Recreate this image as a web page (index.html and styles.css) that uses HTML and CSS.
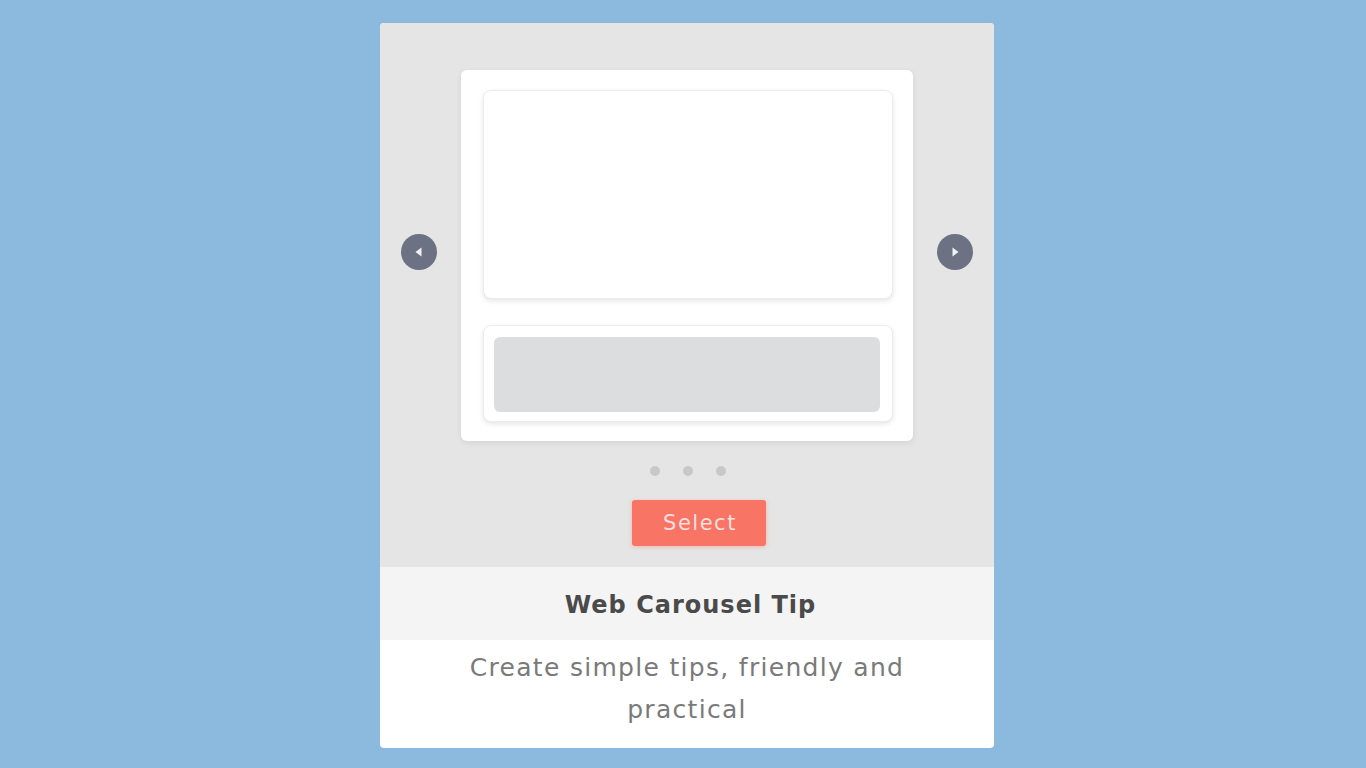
FILE: index.html
```html
<!DOCTYPE html>
<html>
<head>
<meta charset="utf-8">
<link rel="stylesheet" href="styles.css">
</head>
<body>
<div class="page">
  <div class="card">
    <div class="stage">
      <div class="carousel">
        <button class="arrow" aria-label="Previous">
          <svg width="36" height="36" viewBox="0 0 36 36"><circle cx="18" cy="18" r="18" fill="#6c7184"/><path d="M20.5 13.5 L14.5 18 L20.5 22.5 Z" fill="#f2f2f4"/></svg>
        </button>
        <div class="preview">
          <div class="slide-media"></div>
          <div class="slide-footer"><div class="slide-bar"></div></div>
        </div>
        <button class="arrow" aria-label="Next">
          <svg width="36" height="36" viewBox="0 0 36 36"><circle cx="18" cy="18" r="18" fill="#6c7184"/><path d="M15.5 13.5 L21.5 18 L15.5 22.5 Z" fill="#f2f2f4"/></svg>
        </button>
      </div>
      <div class="dots"><span></span><span></span><span></span></div>
      <button class="select">Select</button>
    </div>
    <div class="title">Web Carousel Tip</div>
    <div class="desc">Create simple tips, friendly and practical</div>
  </div>
</div>
</body>
</html>
```

FILE: styles.css
```css
html, body {
  margin: 0;
  padding: 0;
}
body {
  background: #8cb9de;
  font-family: "DejaVu Sans", "Liberation Sans", sans-serif;
  width: 1366px;
  height: 768px;
  overflow: hidden;
}
.page {
  display: flex;
  justify-content: center;
  padding-top: 23px;
  padding-left: 8px;
}
.card {
  width: 614px;
  background: #ffffff;
  border-radius: 4px;
  overflow: hidden;
  display: flex;
  flex-direction: column;
}
.stage {
  background: #e5e5e5;
  padding: 47px 0 21px;
  display: flex;
  flex-direction: column;
  align-items: center;
}
.carousel {
  width: 100%;
  box-sizing: border-box;
  padding: 0 21px;
  display: flex;
  align-items: center;
  justify-content: space-between;
}
.arrow {
  width: 36px;
  height: 36px;
  padding: 0;
  border: 0;
  background: none;
  display: block;
  margin-bottom: 8px;
}
.arrow svg { display: block; }
.preview {
  width: 452px;
  height: 371px;
  box-sizing: border-box;
  background: #fff;
  border-radius: 6px;
  box-shadow: 0 2px 6px rgba(0,0,0,0.08);
  padding: 20px 20px 19px 22px;
  display: flex;
  flex-direction: column;
  gap: 26px;
}
.slide-media {
  height: 209px;
  border-radius: 8px;
  background: #fff;
  border: 1px solid #ececec;
  box-sizing: border-box;
  box-shadow: 0 2px 5px rgba(0,0,0,0.10);
}
.slide-footer {
  height: 97px;
  border-radius: 8px;
  background: #fff;
  border: 1px solid #ececec;
  box-sizing: border-box;
  box-shadow: 0 2px 5px rgba(0,0,0,0.10);
  padding: 11px 12px 9px 10px;
  display: flex;
}
.slide-bar {
  flex: 1;
  background: #dcdddf;
  border-radius: 6px;
}
.dots {
  display: flex;
  gap: 23px;
  margin-top: 25px;
  margin-left: 2px;
}
.dots span {
  width: 10px;
  height: 10px;
  border-radius: 50%;
  background: #c8c8c8;
}
.select {
  margin-top: 24px;
  margin-left: 24px;
  width: 134px;
  height: 46px;
  border: 0;
  border-radius: 3px;
  background: #f87565;
  color: rgba(255,255,255,0.78);
  font-family: "DejaVu Sans", "Liberation Sans", sans-serif;
  font-size: 21px;
  letter-spacing: 1.5px;
  padding: 0 0 0 2px;
  box-shadow: 0 1px 4px rgba(248,117,101,0.4);
}
.title {
  background: #f4f4f4;
  height: 73px;
  display: flex;
  align-items: center;
  justify-content: center;
  font-weight: 700;
  font-size: 24px;
  letter-spacing: 1px;
  color: #4a4a4a;
  padding: 2px 0 0 7px;
  box-sizing: border-box;
}
.desc {
  height: 108px;
  box-sizing: border-box;
  padding: 7px 60px 0;
  text-align: center;
  font-size: 25px;
  letter-spacing: 1.3px;
  line-height: 42px;
  color: #7a7a7a;
}
```
